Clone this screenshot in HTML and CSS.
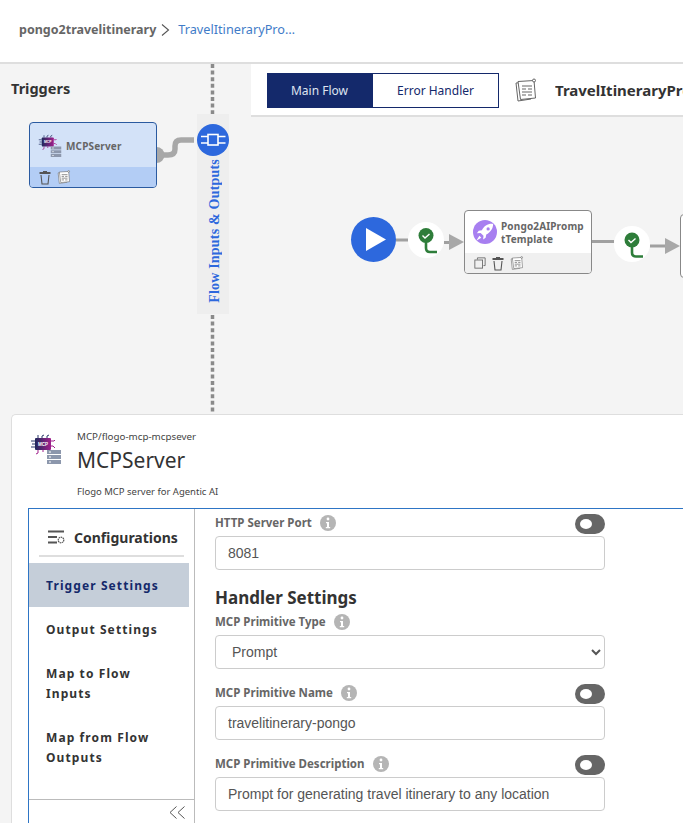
FILE: index.html
```html
<!DOCTYPE html>
<html lang="en">
<head>
    <meta charset="UTF-8">
    <meta name="viewport" content="width=device-width, initial-scale=1.0">
    <title>TravelItineraryPrompt</title>
    <link rel="stylesheet" href="styles.css">
</head>
<body>
    <!-- shared icons -->
    <svg class="defs" width="0" height="0">
        <defs>
            <linearGradient id="chipFill" x1="0" y1="0" x2="1" y2="0">
                <stop offset="0" stop-color="#1f2a5c"/>
                <stop offset="1" stop-color="#a11f8c"/>
            </linearGradient>
            <symbol id="mcpIcon" viewBox="0 0 32 32">
                <g fill="none" stroke-width="1">
                    <path d="M8 6V3M12 6V4l2-1M17 6V4l2-1M5 9H1M5 12H2M5 15H1" stroke="#2c3a6b"/>
                    <path d="M8 18v3l-2 1M13 18v2M21 9h3l1-1M21 14h2l2 2" stroke="#a11f8c"/>
                </g>
                <rect x="5" y="6" width="16" height="12" rx="1" fill="url(#chipFill)"/>
                <text x="13" y="13.800" class="chip-text" text-anchor="middle">MCP</text>
                <g fill="#8c97ac">
                    <rect x="17" y="18" width="14" height="4"/>
                    <rect x="17" y="23" width="14" height="4"/>
                    <rect x="17" y="28" width="14" height="4"/>
                </g>
                <g fill="#fff">
                    <rect x="19" y="19.500" width="2" height="1"/>
                    <rect x="19" y="24.500" width="2" height="1"/>
                    <rect x="19" y="29.500" width="2" height="1"/>
                </g>
            </symbol>
            <symbol id="trashIcon" viewBox="0 0 12 15">
                <path d="M.500 3h11M4 2h4" fill="none" stroke="#555" stroke-width="1.800"/>
                <path d="M2 5l1 9h6l1-9" fill="none" stroke="#555" stroke-width="1.100"/>
            </symbol>
            <symbol id="noteIcon" viewBox="0 0 24 24">
                <g fill="#fff" stroke="#666" stroke-width="1">
                    <path d="M2 5l13-1 2 17-13 2z"/>
                    <path d="M4 3.500l16-1 1.500 17.500-15 1.500z"/>
                </g>
                <path d="M8 8h10M8 11h4M14 11h4M8 14h10M8 17h4M14 17h4" stroke="#666" stroke-width="1.200"/>
                <circle cx="20" cy="2.500" r="1.500" fill="#fff" stroke="#666"/>
            </symbol>
            <symbol id="copyIcon" viewBox="0 0 14 14">
                <path d="M4 3V1h9v9h-2" fill="none" stroke="#666"/>
                <rect x="1" y="3.500" width="9" height="9.500" fill="none" stroke="#666"/>
            </symbol>
            <symbol id="infoIcon" viewBox="0 0 16 16">
                <circle cx="8" cy="8" r="8" fill="#b5b5b5"/>
                <circle cx="8" cy="4" r="1.400" fill="#fff"/>
                <path d="M6 7h3v5h1.200v1.200H5.800V12H7V8.200H6z" fill="#fff"/>
            </symbol>
            <symbol id="branchIcon" viewBox="0 0 24 28">
                <path d="M12 14v7q0 4 4 4h7" fill="none" stroke="#2e7d3a" stroke-width="2.600"/>
                <circle cx="12" cy="8.500" r="7.500" fill="#2e7d3a"/>
                <path d="M8.500 8.500l2.500 2.500 4.500-4" fill="none" stroke="#fff" stroke-width="1.400"/>
            </symbol>
        </defs>
    </svg>

    <header class="topbar">
        <span class="crumb-app">pongo2travelitinerary</span>
        <svg class="crumb-sep" width="9" height="12" viewBox="0 0 9 12"><path d="M1 .500L7.500 6 1 11.500" fill="none" stroke="#555" stroke-width="1.100"/></svg>
        <span class="crumb-flow">TravelItineraryPro…</span>
    </header>

    <section class="workspace">
        <aside class="triggers">
            <h2>Triggers</h2>
        </aside>
        <div class="flow-area">
            <div class="flow-head">
                <div class="tabs">
                    <span class="tab tab-active">Main Flow</span>
                    <span class="tab">Error Handler</span>
                </div>
                <svg class="flow-note" width="24" height="24"><use href="#noteIcon"/></svg>
                <span class="flow-title">TravelItineraryPrompt</span>
            </div>
            <div class="canvas"></div>
        </div>

        <!-- diagram: coordinates are relative to .workspace -->
        <div class="io-strip">
            <span>Flow Inputs &amp; Outputs</span>
        </div>

        <svg class="links" width="683" height="350" viewBox="0 64 683 350">
            <path d="M212.500 64V114M212.500 315V414" fill="none" stroke="#8a8a8a" stroke-width="3.500" stroke-dasharray="4 2.600"/>
            <path d="M160 155h8q7 0 7-6v-3q0-6 6-6h13" fill="none" stroke="#a8a8a8" stroke-width="5.500"/>
            <circle cx="156.500" cy="155" r="8" fill="#a8a8a8"/>
            <circle cx="213" cy="140" r="16" fill="#2d68dd"/>
            <rect x="208" y="134.500" width="10" height="10.500" fill="#2d68dd" stroke="#fff" stroke-width="1.600"/>
            <path d="M201 136.500h7M201 143h7M218 136.500h7.500M218 143h7.500" stroke="#fff" stroke-width="1.500"/>

            <circle cx="373.500" cy="239.500" r="22.500" fill="#2d68dd"/>
            <path d="M366 228l20 11.500-20 11.500z" fill="#fff"/>
            <path d="M396 240h12M444 242.500h6" stroke="#a0a0a0" stroke-width="3"/>
            <circle cx="426" cy="240" r="18" fill="#fff"/>
            <path d="M449 234l15 8-15 8z" fill="#a8a8a8"/>
            <path d="M592 241.500h22M650 246h16" stroke="#a0a0a0" stroke-width="3"/>
            <circle cx="632" cy="244" r="18" fill="#fff"/>
            <path d="M665 238l15 8-15 8z" fill="#a8a8a8"/>
            <use href="#branchIcon" x="414" y="227" width="24" height="28"/>
            <use href="#branchIcon" x="620" y="231.500" width="24" height="28"/>
        </svg>

        <div class="node trigger-node">
            <div class="node-body">
                <svg class="node-logo" width="24" height="24"><use href="#mcpIcon"/></svg>
                <span class="node-name">MCPServer</span>
            </div>
            <div class="node-tools">
                <svg width="12" height="15"><use href="#trashIcon"/></svg>
                <svg width="14" height="14"><use href="#noteIcon"/></svg>
            </div>
        </div>

        <div class="node prompt-node">
            <div class="node-body">
                <svg class="node-logo" width="24" height="24" viewBox="0 0 24 24">
                    <circle cx="12" cy="12" r="12" fill="#a77ff0"/>
                    <g transform="translate(12 12) scale(1.250) translate(-12 -12)">
                        <path d="M18.500 5.500c-4-.5-7 1.500-9 5l-2.500.5-1.500 2 3-.3 2.300 2.300-.3 3 2-1.500.5-2.500c3.500-2 5.500-5 5.500-8.500z" fill="#fff"/>
                        <path d="M7.500 15l-2.500 4 4-2.500z" fill="#fff"/>
                        <circle cx="14.500" cy="9.500" r="1.300" fill="#a77ff0"/>
                    </g>
                </svg>
                <span class="node-name">Pongo2AIPromp<br>tTemplate</span>
            </div>
            <div class="node-tools">
                <svg width="12" height="12"><use href="#copyIcon"/></svg>
                <svg width="12" height="15"><use href="#trashIcon"/></svg>
                <svg width="14" height="14"><use href="#noteIcon"/></svg>
            </div>
        </div>

        <div class="node next-node"></div>
    </section>

    <section class="panel">
        <div class="panel-head">
            <svg class="panel-logo" width="32" height="32"><use href="#mcpIcon"/></svg>
            <div class="panel-text">
                <div class="panel-ref">MCP/flogo-mcp-mcpsever</div>
                <h1>MCPServer</h1>
                <div class="panel-desc">Flogo MCP server for Agentic AI</div>
            </div>
        </div>

        <div class="config">
            <nav class="side">
                <div class="side-head">
                    <svg width="17" height="14" viewBox="0 0 17 14">
                        <path d="M0 1.500h16M0 7h9M0 12.500h9" stroke="#555" stroke-width="2"/>
                        <circle cx="13" cy="10" r="2.800" fill="none" stroke="#555" stroke-width="1.200" stroke-dasharray="1.500 .6"/>
                    </svg>
                    <span>Configurations</span>
                </div>
                <a class="side-item side-active">Trigger Settings</a>
                <a class="side-item">Output Settings</a>
                <a class="side-item">Map to Flow Inputs</a>
                <a class="side-item">Map from Flow Outputs</a>
                <div class="side-foot">
                    <svg width="17" height="13" viewBox="0 0 17 13"><path d="M7.500.500L1 6.500l6.500 6M15.500.500L9 6.500l6.500 6" fill="none" stroke="#555"/></svg>
                </div>
            </nav>

            <form class="form">
                <div class="field">
                    <div class="field-label">
                        <label>HTTP Server Port</label>
                        <svg width="16" height="16"><use href="#infoIcon"/></svg>
                        <span class="toggle"></span>
                    </div>
                    <input type="text" value="8081">
                </div>

                <h3>Handler Settings</h3>

                <div class="field">
                    <div class="field-label">
                        <label>MCP Primitive Type</label>
                        <svg width="16" height="16"><use href="#infoIcon"/></svg>
                    </div>
                    <select><option>Prompt</option></select>
                </div>

                <div class="field">
                    <div class="field-label">
                        <label>MCP Primitive Name</label>
                        <svg width="16" height="16"><use href="#infoIcon"/></svg>
                        <span class="toggle"></span>
                    </div>
                    <input type="text" value="travelitinerary-pongo">
                </div>

                <div class="field">
                    <div class="field-label">
                        <label>MCP Primitive Description</label>
                        <svg width="16" height="16"><use href="#infoIcon"/></svg>
                        <span class="toggle"></span>
                    </div>
                    <input type="text" value="Prompt for generating travel itinerary to any location">
                </div>
            </form>
        </div>
    </section>
</body>
</html>
```

FILE: styles.css
```css
* {
    box-sizing: border-box;
}

html, body {
    height: 823px;
    overflow: hidden;
}

body {
    margin: 0;
    background-color: #f4f4f4;
    font-family: "Noto Sans", "Open Sans", sans-serif;
    color: #333;
}

.defs {
    position: absolute;
}

.chip-text {
    font-family: "Liberation Sans", sans-serif;
    font-size: 4.500px;
    font-weight: bold;
    fill: #fff;
}

/* top bar */
.topbar {
    height: 64px;
    display: flex;
    align-items: center;
    padding: 0 0 4px 19px;
    background-color: white;
    border-bottom: 2px solid #dedede;
}

.crumb-app {
    font-size: 12.500px;
    font-weight: 700;
    color: #666;
}

.crumb-sep {
    margin: 1px 8px 0 5px;
}

.crumb-flow {
    font-size: 12.700px;
    color: #3f7cc8;
}

/* workspace */
.workspace {
    position: relative;
    height: 350px;
    display: grid;
    grid-template-columns: 251px 1fr;
    overflow: hidden;
}

.triggers h2 {
    margin: 14px 0 0 11px;
    font-size: 14.500px;
    font-weight: 700;
    color: #333;
}

.flow-area {
    display: flex;
    flex-direction: column;
    min-width: 0;
}

.flow-head {
    height: 53px;
    display: flex;
    align-items: center;
    padding: 0 0 0 16px;
    background-color: white;
    border-bottom: 2px solid #dedede;
    overflow: hidden;
}

.tabs {
    display: flex;
    flex: none;
    margin-top: 2px;
}

.tab {
    width: 126px;
    height: 35px;
    display: flex;
    align-items: center;
    justify-content: center;
    font-size: 12px;
    color: #14296b;
    border: 1px solid #14296b;
    border-left: none;
}

.tab-active {
    width: 106px;
    color: #dfe4f0;
    background-color: #14296b;
}

.flow-note {
    flex: none;
    margin: 0 17px 0 15px;
}

.flow-title {
    min-width: 0;
    overflow: hidden;
    white-space: nowrap;
    font-size: 15px;
    font-weight: 700;
    color: #333;
}

.canvas {
    flex: 1;
}

/* diagram pieces */
.io-strip {
    position: absolute;
    left: 197px;
    top: 50px;
    width: 32px;
    height: 200px;
    display: flex;
    align-items: flex-end;
    justify-content: center;
    padding: 0 0 11px 3px;
    background-color: #eeeeee;
}

.io-strip span {
    writing-mode: vertical-rl;
    transform: rotate(180deg);
    font-family: "Liberation Serif", serif;
    font-size: 14px;
    font-weight: bold;
    letter-spacing: .2px;
    color: #2d68dd;
    white-space: nowrap;
}

.links {
    position: absolute;
    left: 0;
    top: 0;
    overflow: visible;
}

.node {
    position: absolute;
    display: flex;
    flex-direction: column;
    width: 128px;
    overflow: hidden;
    border: 1px solid #888;
    border-radius: 4px;
    background-color: white;
}

.node-body {
    height: 42px;
    display: flex;
    align-items: center;
    gap: 4px;
    padding-left: 8px;
}

.node-name {
    padding-top: 2px;
    font-size: 10px;
    font-weight: 700;
    line-height: 13px;
    letter-spacing: .15px;
    color: #666;
}

.node-tools {
    flex: 1;
    display: flex;
    align-items: center;
    gap: 6px;
    padding-left: 9px;
    background-color: #f0f0f0;
}

.trigger-node {
    left: 29px;
    top: 58px;
    height: 66px;
    border-color: #2a5aa0;
    background-color: #d3e2f8;
}

.trigger-node .node-body {
    height: 44px;
    gap: 4px;
}

.trigger-node .node-tools {
    background-color: #b3cdf5;
}

.prompt-node {
    left: 464px;
    top: 146px;
    height: 64px;
}

.next-node {
    left: 680px;
    top: 150px;
    height: 64px;
}

/* bottom panel */
.panel {
    height: 409px;
    margin-left: 11px;
    padding: 0 0 0 16px;
    background-color: white;
    border: 1px solid #dedede;
    border-right: none;
    border-bottom: none;
    border-top-left-radius: 5px;
}

.panel-head {
    height: 93px;
    display: flex;
}

.panel-logo {
    flex: none;
    margin: 17px 0 0 2px;
}

.panel-text {
    margin: 14px 0 0 15px;
}

.panel-ref, .panel-desc {
    font-size: 9.800px;
    line-height: 16px;
    color: #444;
}

.panel-text h1 {
    margin: 0;
    font-size: 21px;
    font-weight: 400;
    line-height: 30px;
    color: #333;
}

.panel-desc {
    margin-top: 9px;
    font-size: 9.500px;
}

.config {
    height: 330px;
    display: flex;
    border-top: 1px solid #2e75c5;
    border-left: 1px solid #2e75c5;
}

/* sidebar */
.side {
    position: relative;
    flex: none;
    width: 166px;
    border-right: 1px solid #bbb;
}

.side-head {
    width: 145px;
    height: 48px;
    display: flex;
    align-items: center;
    gap: 9px;
    margin: 0 0 6px 10px;
    padding: 10px 0 0 9px;
    font-size: 14px;
    font-weight: 700;
    color: #333;
    border-bottom: 2px solid #dedede;
}

.side-item {
    display: block;
    width: 160px;
    padding: 13px 17px 11px;
    font-size: 12px;
    font-weight: 700;
    line-height: 20px;
    letter-spacing: 1.100px;
    color: #333;
}

.side-active {
    height: 44px;
    color: #14296b;
    background-color: #c5ced9;
}

.side-foot {
    position: absolute;
    left: 0;
    right: 0;
    top: 290px;
    height: 40px;
    display: flex;
    justify-content: flex-end;
    padding: 6px 8px 0 0;
    border-top: 1px solid #bbb;
}

/* form */
.form {
    width: 410px;
    flex: none;
    padding: 5px 0 0 20px;
}

.field {
    margin-bottom: 15px;
}

.field-label {
    height: 22px;
    display: flex;
    align-items: center;
    gap: 8px;
    padding-bottom: 2px;
}

.field-label label {
    margin-bottom: 3px;
    font-size: 11.500px;
    font-weight: 700;
    color: #666;
}

.field-label svg {
    margin-bottom: 2px;
}

.toggle {
    position: relative;
    width: 30px;
    height: 20px;
    margin-left: auto;
    border-radius: 10px;
    background-color: #666;
}

.toggle::after {
    content: "";
    position: absolute;
    left: 5px;
    top: 5px;
    width: 12px;
    height: 10px;
    border-radius: 50%;
    background-color: white;
}

.form input, .form select {
    display: block;
    width: 390px;
    height: 34px;
    padding: 0 12px;
    font-family: "Liberation Sans", Arial, sans-serif;
    font-size: 14px;
    color: #555;
    background-color: white;
    border: 1px solid #ccc;
    border-radius: 4px;
}

.form h3 {
    margin: 0;
    height: 28px;
    font-size: 17px;
    font-weight: 700;
    line-height: 26px;
    color: #333;
}
```
